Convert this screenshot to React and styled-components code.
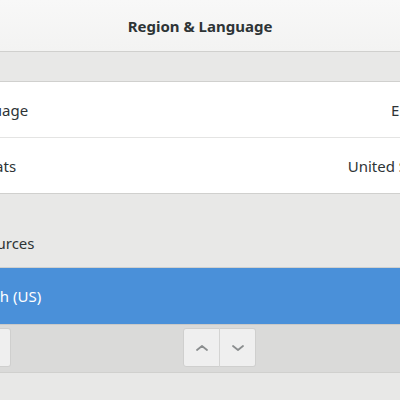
import React from 'react'
import styled, {createGlobalStyle} from 'styled-components'

const Ink = '#2e3436'
const Border = '#d0d0ce'

const Global = createGlobalStyle`
html, body {
  margin: 0;
  padding: 0;
  background: #e8e8e7;
  font-family: "Noto Sans", "Open Sans", sans-serif;
  color: ${Ink};
}
`
const Screen = styled.div`
width: 400px;
height: 400px;
overflow: hidden;
background: #e8e8e7;
`
const Window = styled.div`
width: 640px;
margin-left: -120px;
`
const HeaderBar = styled.div`
height: 52px;
display: flex;
align-items: center;
justify-content: center;
background: linear-gradient(#f8f8f8, #f3f3f2);
border-bottom: 1px solid ${Border};
box-sizing: border-box;
`
const Title = styled.div`
font-size: 15px;
line-height: 20px;
font-weight: 700;
padding-top: 1px;
`
const Body = styled.div`
padding: 29px 57px 0;
`
const Frame = styled.div`
background: #fff;
border: 1px solid ${Border};
`
const Row = styled.div`
height: ${props => props.selected ? 56 : 55}px;
display: flex;
align-items: center;
justify-content: space-between;
padding: 0 20px;
font-size: 15px;
line-height: 20px;
background: ${props => props.selected ? '#4a90d9' : '#fff'};
color: ${props => props.selected ? '#fff' : Ink};
& + & {
  border-top: 1px solid #e4e4e3;
}
`
const Heading = styled.div`
font-size: 15px;
line-height: 20px;
margin: 39px 0 14px;
`
const Toolbar = styled.div`
display: flex;
align-items: flex-start;
padding: 3px 0 5px;
background: #dadad9;
border-top: 1px solid #c9c9c8;
`
const Group = styled.div`
display: flex;
margin-left: ${props => props.offset || 0}px;
`
const Button = styled.div`
width: 37px;
height: 39px;
display: flex;
align-items: center;
justify-content: center;
background: #efefef;
border: 1px solid #cfcfce;
box-sizing: border-box;
& + & {
  border-left: 1px solid #d4d4d3;
  margin-left: -1px;
}
&:first-child {
  border-radius: 3px 0 0 3px;
}
&:last-child {
  border-radius: 0 3px 3px 0;
}
`

const Chevron = ({up}) => (
  <svg width="16" height="16" viewBox="0 0 16 16">
    <polyline
      points={up ? '3,10 8,6 13,10' : '3,6 8,10 13,6'}
      fill="none"
      stroke="#8a8d8e"
      strokeWidth="1.8"
      strokeLinecap="round"
      strokeLinejoin="round"
    />
  </svg>
)

const Plus = () => (
  <svg width="16" height="16" viewBox="0 0 16 16">
    <path d="M8 3v10M3 8h10" stroke="#8a8d8e" strokeWidth="1.8" />
  </svg>
)

const Minus = () => (
  <svg width="16" height="16" viewBox="0 0 16 16">
    <path d="M3 8h10" stroke="#8a8d8e" strokeWidth="1.8" />
  </svg>
)

export default function App() {
  return (
    <Screen>
      <Global />
      <Window>
        <HeaderBar>
          <Title>Region &amp; Language</Title>
        </HeaderBar>
        <Body>
          <Frame>
            <Row>
              <span>Language</span>
              <span>English</span>
            </Row>
            <Row>
              <span>Formats</span>
              <span>United States</span>
            </Row>
          </Frame>
          <Heading>Input Sources</Heading>
          <Frame>
            <Row selected>
              <span>English (US)</span>
            </Row>
            <Toolbar>
              <Group>
                <Button><Plus /></Button>
                <Button><Minus /></Button>
              </Group>
              <Group offset={172}>
                <Button><Chevron up /></Button>
                <Button><Chevron /></Button>
              </Group>
            </Toolbar>
          </Frame>
        </Body>
      </Window>
    </Screen>
  )
}
